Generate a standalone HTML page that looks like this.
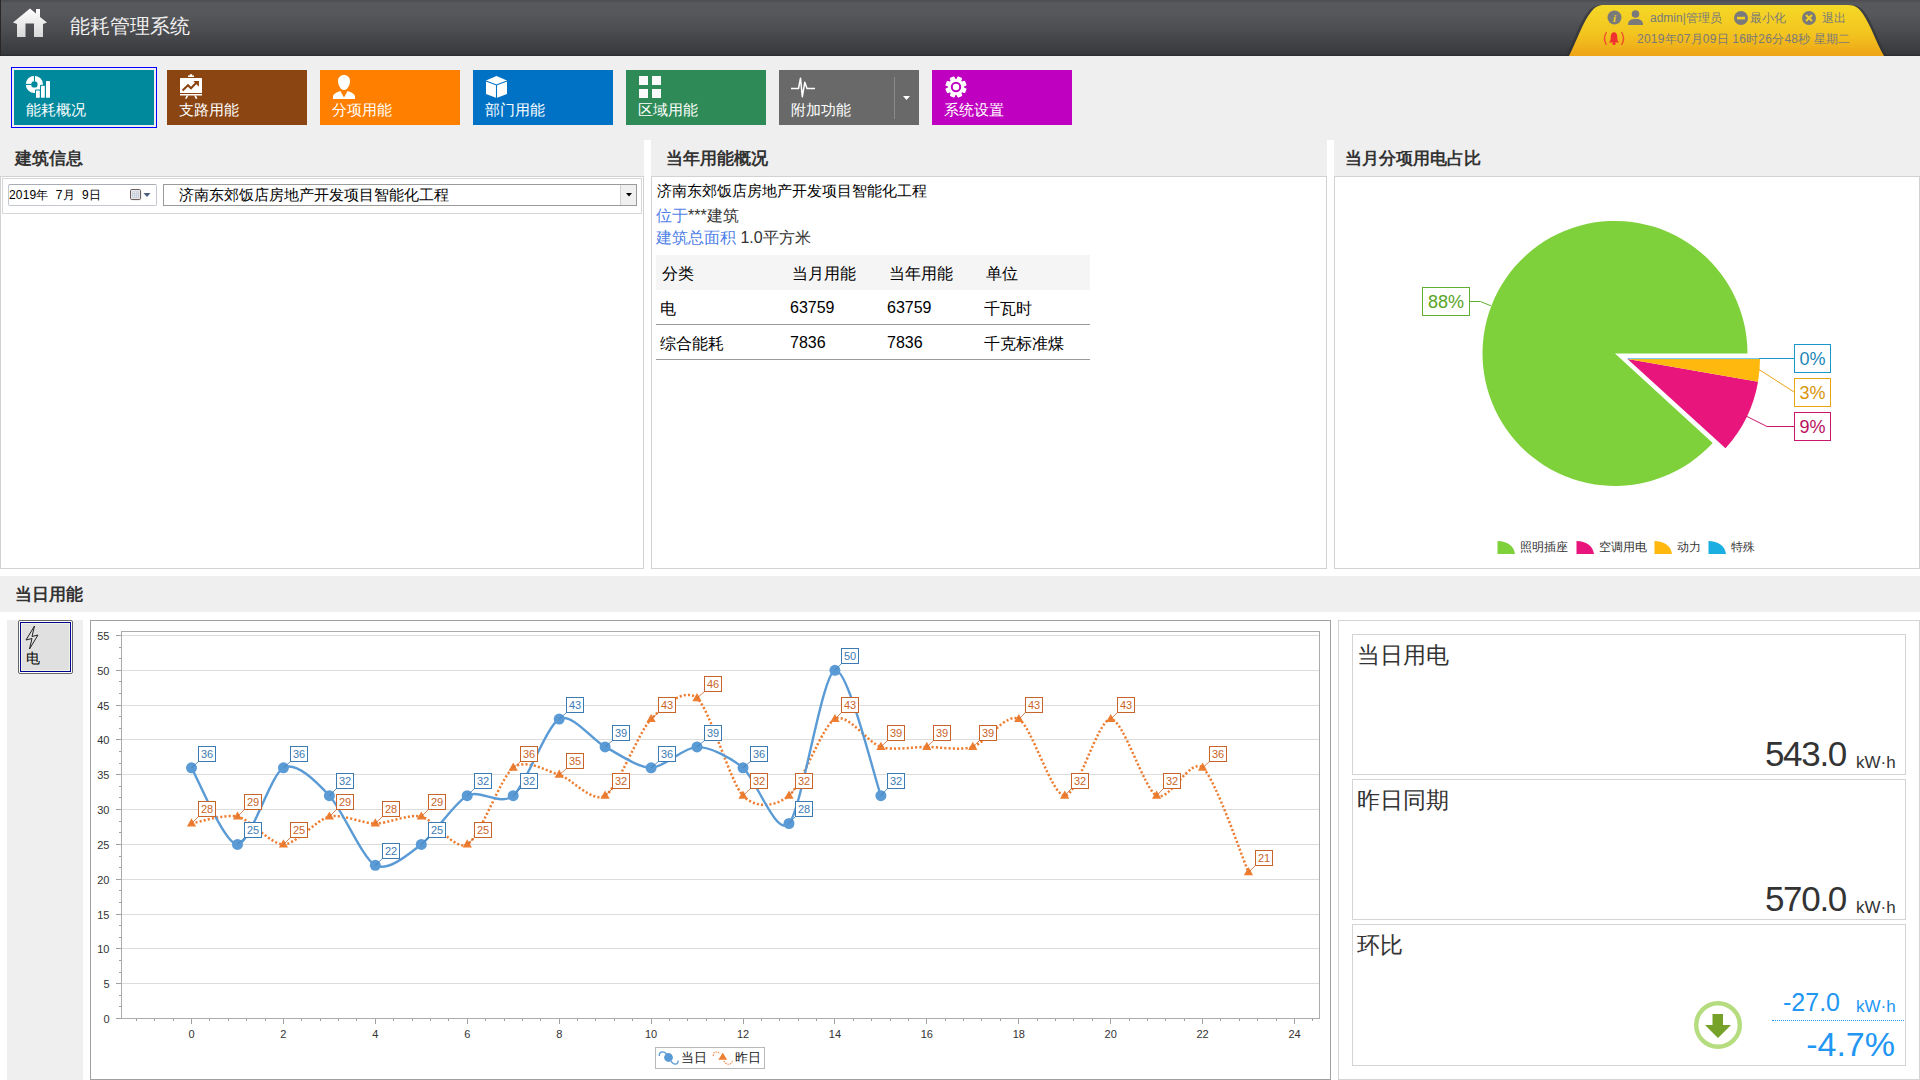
<!DOCTYPE html>
<html><head><meta charset="utf-8"><style>
*{margin:0;padding:0;box-sizing:border-box}
body{width:1920px;height:1080px;overflow:hidden;background:#efefef;font-family:"Liberation Sans", sans-serif;position:relative}
.a{position:absolute}
.hdr{left:0;top:0;width:1920px;height:56px;background:linear-gradient(#4c4c50 0px,#58595d 3px,#56575b 14px,#4c4d51 30px,#3e4043 46px,#36383b 54px,#28292c 56px);border-left:1px solid #2a2626}
.title{left:70px;top:13px;font-size:20px;color:#f0f0f0;letter-spacing:0px}
.btn{top:70px;width:140px;height:55px;color:#fff}
.btn .t{position:absolute;left:12px;top:31px;font-size:15px;line-height:18px}
.btn svg{position:absolute;left:8px;top:0px}
.ph{font-size:17px;font-weight:bold;color:#333}
.panel{background:#fff;border:1px solid #d2d2d2}
</style></head><body>

<div class="a hdr"></div>
<svg class="a" style="left:12px;top:8px" width="36" height="30" viewBox="0 0 36 30"><defs><linearGradient id="hg" x1="0" y1="0" x2="0" y2="1"><stop offset="0" stop-color="#fff"/><stop offset="1" stop-color="#d8d8d8"/></linearGradient></defs><path d="M18,0.5 L24,5.5 L24,1 L28,1 L28,9 L35,14.5 L31,16 L31,29 L22,29 L22,15.5 L13.5,15.5 L13.5,29 L5,29 L5,16 L1,14.5 Z" fill="url(#hg)"/></svg>
<div class="a title">能耗管理系统</div>
<svg class="a" style="left:1560px;top:0" width="340" height="56" viewBox="0 0 340 56"><defs><linearGradient id="yg" x1="0" y1="0" x2="0" y2="1"><stop offset="0" stop-color="#f5d827"/><stop offset="0.55" stop-color="#f3c51f"/><stop offset="1" stop-color="#eea417"/></linearGradient></defs><path d="M6,56 C14,40 20,22 28,12 C32,7 36,5 42,5 L290,5 C298,5 302,8 306,14 C314,26 318,42 327,56 Z" fill="#2e2f33" opacity="0.6"/><path d="M9,56 C17,40 23,22 31,12 C35,7 38,5 44,5 L288,5 C295,5 299,8 303,14 C311,26 316,42 324,56 Z" fill="url(#yg)"/></svg>
<div class="a" style="left:1650px;top:10px;font-size:12px;color:#7a7a7a">admin|管理员</div>
<div class="a" style="left:1750px;top:10px;font-size:12px;color:#7a7a7a">最小化</div>
<div class="a" style="left:1822px;top:10px;font-size:12px;color:#7a7a7a">退出</div>
<div class="a" style="left:1637px;top:31px;font-size:12px;letter-spacing:0.22px;color:#7a7a7a">2019年07月09日 16时26分48秒 星期二</div>
<svg class="a" style="left:1600px;top:8px" width="260" height="40"><circle cx="14.5" cy="9.5" r="7" fill="#7a7a7a"/><text x="14.5" y="14" text-anchor="middle" font-size="11" font-style="italic" font-weight="bold" fill="#f3d020" font-family='Liberation Serif'>i</text><circle cx="35.5" cy="6" r="3.8" fill="#7a7a7a"/><path d="M28,17 C28,12 31,11 35.5,11 C40,11 43,12 43,17 Z" fill="#7a7a7a"/><circle cx="141" cy="10" r="7" fill="#7a7a7a"/><rect x="137" y="8.8" width="8" height="2.6" fill="#f3d020"/><circle cx="209" cy="10" r="7" fill="#7a7a7a"/><path d="M206,7 L212,13 M212,7 L206,13" stroke="#f3d020" stroke-width="2"/><path d="M9,34.5 L19,34.5 C17.5,33 17.3,31.5 17.3,29 C17.3,26 16,24.3 14,24.3 C12,24.3 10.7,26 10.7,29 C10.7,31.5 10.5,33 9,34.5 Z" fill="#f03030"/><circle cx="14" cy="35.5" r="1.6" fill="#f03030"/><path d="M6.5,24 C4,28 4,33 6.5,37 M21.5,24 C24,28 24,33 21.5,37" stroke="#f04a30" stroke-width="1.3" fill="none"/></svg>
<div class="a btn" style="left:14px;background:#00889c"><svg width="40" height="30"><circle cx="12.4" cy="14.4" r="5.9" fill="none" stroke="#fff" stroke-width="5.4"/><rect x="11.9" y="5" width="1.1" height="6.5" fill="#00889c"/><rect x="3.5" y="13.9" width="6" height="1.1" fill="#00889c"/><rect x="13" y="19.5" width="5.8" height="9" rx="0.8" fill="#00889c"/><rect x="18" y="14.8" width="5.8" height="14" rx="0.8" fill="#00889c"/><rect x="14" y="20.5" width="3.8" height="7.3" rx="0.6" fill="#fff"/><rect x="19" y="15.8" width="3.8" height="12" rx="0.6" fill="#fff"/><rect x="24" y="11" width="4" height="16.8" rx="0.6" fill="#fff"/></svg><div class="t">能耗概况</div></div>
<div class="a btn" style="left:167px;background:#8b4513"><svg width="40" height="30"><rect x="5" y="8" width="22" height="15" rx="0.6" fill="#fff"/><path d="M13,7 L13,5.6 L14.8,5.6 L14.8,4.2 L17.2,4.2 L17.2,5.6 L19,5.6 L19,7 Z" fill="#fff"/><rect x="5" y="24" width="22" height="1.5" fill="#fff"/><path d="M11.6,25.5 L13.4,25.5 L11.6,28.8 L10,28.8 Z M19.2,25.5 L21,25.5 L22.4,28.8 L20.6,28.8 Z" fill="#fff"/><path d="M7.5,20.5 L13,15.3 L16,18.3 L21.5,12.6" stroke="#8b4513" stroke-width="2.1" fill="none"/><path d="M18.3,11 L24,11 L23.8,16.8 Z" fill="#8b4513"/></svg><div class="t">支路用能</div></div>
<div class="a btn" style="left:320px;background:#ff8000"><svg width="40" height="30"><path d="M16,5 C19.5,5 22,7.5 22,11 C22,12.5 21.8,14 21,15.5 C20,18 18.3,20 16,20 C13.7,20 12,18 11,15.5 C10.2,14 10,12.5 10,11 C10,7.5 12.5,5 16,5 Z" fill="#fff"/><path d="M12.3,21 L16,27.5 L19.6,21 C23,22 27,24 27,26.5 L27,29 L5,29 L5,26.5 C5,24 9,22 12.3,21 Z" fill="#fff"/></svg><div class="t">分项用能</div></div>
<div class="a btn" style="left:473px;background:#0072c6"><svg width="40" height="30"><path d="M15.5,6 L26,10.5 L26,24 L15.5,28 L5,24 L5,10.5 Z" fill="#fff"/><path d="M5,11 L15.5,15 L26,11 M15.5,15 L15.5,28.5" stroke="#0072c6" stroke-width="1.1" fill="none"/></svg><div class="t">部门用能</div></div>
<div class="a btn" style="left:626px;background:#2e8b57"><svg width="40" height="30"><rect x="5" y="6" width="9" height="9" fill="#fafafa"/><rect x="18" y="6" width="9" height="9" fill="#fafafa"/><rect x="5" y="19" width="9" height="9" fill="#fafafa"/><rect x="18" y="19" width="9" height="9" fill="#fafafa"/></svg><div class="t">区域用能</div></div>
<div class="a btn" style="left:779px;background:#696969"><svg width="40" height="30"><path d="M4,18.5 L11.5,18.5 L13.5,8.2 L15.3,26.8 L17.8,12.2 L20,18.5 L28,18.5" stroke="#fff" stroke-width="1.5" fill="none" stroke-linejoin="round"/></svg><div class="t">附加功能</div></div>
<div class="a btn" style="left:932px;background:#c000c0"><svg width="40" height="30"><g transform="translate(16,17)"><circle r="8" fill="#fff"/><g fill="#fff"><rect x="-2.6" y="-10.6" width="5.2" height="4" rx="1" transform="rotate(22)"/><rect x="-2.6" y="-10.6" width="5.2" height="4" rx="1" transform="rotate(67)"/><rect x="-2.6" y="-10.6" width="5.2" height="4" rx="1" transform="rotate(112)"/><rect x="-2.6" y="-10.6" width="5.2" height="4" rx="1" transform="rotate(157)"/><rect x="-2.6" y="-10.6" width="5.2" height="4" rx="1" transform="rotate(202)"/><rect x="-2.6" y="-10.6" width="5.2" height="4" rx="1" transform="rotate(247)"/><rect x="-2.6" y="-10.6" width="5.2" height="4" rx="1" transform="rotate(292)"/><rect x="-2.6" y="-10.6" width="5.2" height="4" rx="1" transform="rotate(337)"/></g><circle r="4.2" fill="none" stroke="#c000c0" stroke-width="2"/></g></svg><div class="t">系统设置</div></div>
<div class="a" style="left:11px;top:67px;width:146px;height:61px;border:1px solid #0000ff"></div>
<div class="a" style="left:894px;top:77px;width:1px;height:42px;background:#8a8a8a"></div>
<svg class="a" style="left:903px;top:96px" width="8" height="5"><path d="M0,0 L7,0 L3.5,4 Z" fill="#fff"/></svg>
<div class="a ph" style="left:15px;top:147px">建筑信息</div>
<div class="a ph" style="left:666px;top:147px">当年用能概况</div>
<div class="a ph" style="left:1345px;top:147px">当月分项用电占比</div>
<div class="a" style="left:644px;top:140px;width:7px;height:436px;background:#fff"></div>
<div class="a" style="left:1327px;top:140px;width:7px;height:436px;background:#fff"></div>
<div class="a" style="left:0;top:569px;width:1920px;height:7px;background:#fff"></div>
<div class="a panel" style="left:0;top:176px;width:644px;height:393px"></div>
<div class="a panel" style="left:651px;top:176px;width:676px;height:393px"></div>
<div class="a panel" style="left:1334px;top:176px;width:586px;height:393px"></div>
<div class="a" style="left:2px;top:178px;width:640px;height:36px;border:1px solid #d8d8d8;background:#fff"></div>
<div class="a" style="left:8px;top:184px;width:149px;height:22px;border:1px solid #c4c8d0;border-top-color:#a8acb4;border-radius:2px;background:#fff"></div>
<div class="a" style="left:9px;top:187px;font-size:12px;letter-spacing:0.2px;color:#000">2019年&nbsp;&nbsp;7月&nbsp;&nbsp;9日</div>
<svg class="a" style="left:129px;top:188px" width="24" height="14"><rect x="2" y="2" width="10.5" height="10.5" rx="1.5" fill="#c8c8c8" opacity="0.5"/><rect x="1.5" y="1.5" width="10" height="10" rx="1.2" fill="#e6eaf0" stroke="#6e5e5c"/><rect x="3" y="3.5" width="7" height="6.5" fill="#c4ccd8"/><rect x="3.8" y="4.2" width="1" height="1" fill="#fff"/><rect x="3.8" y="6.2" width="1" height="1" fill="#fff"/><rect x="3.8" y="8.2" width="1" height="1" fill="#fff"/><rect x="5.8" y="4.2" width="1" height="1" fill="#fff"/><rect x="5.8" y="6.2" width="1" height="1" fill="#fff"/><rect x="5.8" y="8.2" width="1" height="1" fill="#fff"/><rect x="7.8" y="4.2" width="1" height="1" fill="#fff"/><rect x="7.8" y="6.2" width="1" height="1" fill="#fff"/><rect x="7.8" y="8.2" width="1" height="1" fill="#fff"/><path d="M14.5,5 L21.5,5 L18,9 Z" fill="#4a5a80"/></svg>
<div class="a" style="left:163px;top:184px;width:474px;height:22px;border:1px solid #9a9a9a;background:#fff"></div>
<div class="a" style="left:620px;top:185px;width:16px;height:20px;background:#f0f0f0;border-left:1px solid #d0d0d0"></div>
<svg class="a" style="left:626px;top:193px" width="6" height="4"><path d="M0,0 L6,0 L3,3.5 Z" fill="#000"/></svg>
<div class="a" style="left:179px;top:186px;font-size:15px;color:#000">济南东郊饭店房地产开发项目智能化工程</div>
<div class="a" style="left:657px;top:182px;font-size:15px;color:#000">济南东郊饭店房地产开发项目智能化工程</div>
<div class="a" style="left:656px;top:206px;font-size:16px;color:#333"><span style="color:#4f7fe8">位于</span>***建筑</div>
<div class="a" style="left:656px;top:228px;font-size:16px;color:#333"><span style="color:#4f7fe8">建筑总面积</span> 1.0平方米</div>
<div class="a" style="left:656px;top:255px;width:434px;height:35px;background:#f5f5f5"></div>
<div class="a" style="left:656px;top:324px;width:434px;height:1px;background:#9a9a9a"></div>
<div class="a" style="left:656px;top:359px;width:434px;height:1px;background:#9a9a9a"></div>
<div class="a" style="left:662px;top:264px;font-size:16px;color:#000">分类</div>
<div class="a" style="left:792px;top:264px;font-size:16px;color:#000">当月用能</div>
<div class="a" style="left:889px;top:264px;font-size:16px;color:#000">当年用能</div>
<div class="a" style="left:986px;top:264px;font-size:16px;color:#000">单位</div>
<div class="a" style="left:660px;top:299px;font-size:16px;color:#000">电</div>
<div class="a" style="left:790px;top:299px;font-size:16px;color:#000">63759</div>
<div class="a" style="left:887px;top:299px;font-size:16px;color:#000">63759</div>
<div class="a" style="left:984px;top:299px;font-size:16px;color:#000">千瓦时</div>
<div class="a" style="left:660px;top:334px;font-size:16px;color:#000">综合能耗</div>
<div class="a" style="left:790px;top:334px;font-size:16px;color:#000">7836</div>
<div class="a" style="left:887px;top:334px;font-size:16px;color:#000">7836</div>
<div class="a" style="left:984px;top:334px;font-size:16px;color:#000">千克标准煤</div>
<svg class="a" style="left:1497px;top:540px" width="20" height="16"><path d="M0.5,14 L0.5,1 C10,1 17,6 18,14 Z" fill="#7fd13b"/></svg>
<div class="a" style="left:1520px;top:539px;font-size:12px;color:#333">照明插座</div>
<svg class="a" style="left:1576px;top:540px" width="20" height="16"><path d="M0.5,14 L0.5,1 C10,1 17,6 18,14 Z" fill="#e8157c"/></svg>
<div class="a" style="left:1599px;top:539px;font-size:12px;color:#333">空调用电</div>
<svg class="a" style="left:1654px;top:540px" width="20" height="16"><path d="M0.5,14 L0.5,1 C10,1 17,6 18,14 Z" fill="#ffb80d"/></svg>
<div class="a" style="left:1677px;top:539px;font-size:12px;color:#333">动力</div>
<svg class="a" style="left:1708px;top:540px" width="20" height="16"><path d="M0.5,14 L0.5,1 C10,1 17,6 18,14 Z" fill="#1aafe0"/></svg>
<div class="a" style="left:1731px;top:539px;font-size:12px;color:#333">特殊</div>
<div class="a ph" style="left:15px;top:583px">当日用能</div>
<div class="a" style="left:0;top:612px;width:1920px;height:468px;background:#fff"></div>
<div class="a" style="left:7px;top:620px;width:76px;height:460px;background:#efefef"></div>
<div class="a" style="left:18px;top:620px;width:55px;height:54px;border:1px solid #666;background:#fff;border-radius:2px"></div>
<div class="a" style="left:20px;top:622px;width:51px;height:50px;border:1px solid #000090;background:#e0e0e0;box-shadow:inset 1px 1px 0 #f2f2e4, inset -1px -1px 0 #f2f2e4"></div>
<svg class="a" style="left:25px;top:625px" width="16" height="26"><path d="M9.5,1 L1,15 L7,13.5 L4.5,24 L13,10 L7,11.5 Z" fill="none" stroke="#222" stroke-width="1"/></svg>
<div class="a" style="left:26px;top:650px;font-size:14px;color:#000">电</div>
<div class="a" style="left:90px;top:620px;width:241px;height:460px"></div>
<div class="a" style="left:90px;top:620px;width:1241px;height:460px;border:1px solid #a0a0a0;background:#fff"></div>
<div class="a" style="left:1338px;top:620px;width:582px;height:460px;border:1px solid #d4d4d4;background:#fff"></div>
<div class="a" style="left:1352px;top:634px;width:554px;height:141px;border:1px solid #d4d4d4"></div>
<div class="a" style="left:1357px;top:644px;font-size:23px;line-height:23px;color:#333">当日用电</div>
<div class="a" style="left:1600px;top:736px;width:246px;text-align:right;font-size:35px;line-height:35px;letter-spacing:-1.3px;color:#333">543.0</div>
<div class="a" style="left:1856px;top:754px;font-size:17px;line-height:17px;color:#333">kW·h</div>
<div class="a" style="left:1352px;top:779px;width:554px;height:141px;border:1px solid #d4d4d4"></div>
<div class="a" style="left:1357px;top:789px;font-size:23px;line-height:23px;color:#333">昨日同期</div>
<div class="a" style="left:1600px;top:881px;width:246px;text-align:right;font-size:35px;line-height:35px;letter-spacing:-1.3px;color:#333">570.0</div>
<div class="a" style="left:1856px;top:899px;font-size:17px;line-height:17px;color:#333">kW·h</div>
<div class="a" style="left:1352px;top:924px;width:554px;height:142px;border:1px solid #d4d4d4"></div>
<div class="a" style="left:1357px;top:934px;font-size:23px;line-height:23px;color:#333">环比</div>
<div class="a" style="left:1600px;top:990px;width:240px;text-align:right;font-size:25px;line-height:25px;color:#2196f3">-27.0</div>
<div class="a" style="left:1856px;top:998px;font-size:17px;line-height:17px;color:#2196f3">kW·h</div>
<div class="a" style="left:1772px;top:1020px;width:132px;border-top:1px dotted #2196f3"></div>
<div class="a" style="left:1600px;top:1027px;width:295px;text-align:right;font-size:34px;line-height:34px;color:#2196f3">-4.7%</div>
<svg class="a" style="left:1692px;top:1000px" width="52" height="52"><circle cx="26" cy="25" r="21.8" fill="#fff" stroke="#b5dc7e" stroke-width="4.4"/><path d="M20.5,14 L31,14 L31,25 L39,25 L26,38 L13,25 L20.5,25 Z" fill="#76a22a"/></svg>
<div class="a" style="left:655px;top:1047px;width:110px;height:22px;border:1px solid #b8b8b8;background:#fff"></div>
<svg class="a" style="left:657px;top:1049px" width="106" height="18"><path d="M2.3,7 C2,2 7,2 9.5,5" stroke="#5b9bd5" stroke-width="1.3" fill="none"/><path d="M14,12 C16,16 21,16.5 21.3,11.5" stroke="#5b9bd5" stroke-width="1.3" fill="none"/><circle cx="11.5" cy="8.5" r="4.4" fill="#5b9bd5"/><path d="M56.3,7 C56,2 61,2 63,5 M67,12 C69,16.5 75,16.5 75.6,11" stroke="#ed7d31" stroke-width="1.1" stroke-dasharray="1.3 1.1" fill="none"/><path d="M65.75,3.8 L70.2,10.8 L61.3,10.8 Z" fill="#ed7d31"/></svg>
<div class="a" style="left:681px;top:1049px;font-size:13px;color:#222">当日</div>
<div class="a" style="left:735px;top:1049px;font-size:13px;color:#222">昨日</div>
<svg width="1920" height="1080" style="position:absolute;left:0;top:0">
<line x1="116" y1="1018.5" x2="122" y2="1018.5" stroke="#a0a0a0" stroke-width="1"/>
<text x="109.5" y="1022.5" text-anchor="end" font-size="11" fill="#333" font-family='"Liberation Sans", sans-serif'>0</text>
<line x1="122" y1="983.5" x2="1319" y2="983.5" stroke="#dcdcdc" stroke-width="1"/>
<line x1="116" y1="983.5" x2="122" y2="983.5" stroke="#a0a0a0" stroke-width="1"/>
<text x="109.5" y="987.5" text-anchor="end" font-size="11" fill="#333" font-family='"Liberation Sans", sans-serif'>5</text>
<line x1="122" y1="948.5" x2="1319" y2="948.5" stroke="#dcdcdc" stroke-width="1"/>
<line x1="116" y1="948.5" x2="122" y2="948.5" stroke="#a0a0a0" stroke-width="1"/>
<text x="109.5" y="952.5" text-anchor="end" font-size="11" fill="#333" font-family='"Liberation Sans", sans-serif'>10</text>
<line x1="122" y1="914.5" x2="1319" y2="914.5" stroke="#dcdcdc" stroke-width="1"/>
<line x1="116" y1="914.5" x2="122" y2="914.5" stroke="#a0a0a0" stroke-width="1"/>
<text x="109.5" y="918.5" text-anchor="end" font-size="11" fill="#333" font-family='"Liberation Sans", sans-serif'>15</text>
<line x1="122" y1="879.5" x2="1319" y2="879.5" stroke="#dcdcdc" stroke-width="1"/>
<line x1="116" y1="879.5" x2="122" y2="879.5" stroke="#a0a0a0" stroke-width="1"/>
<text x="109.5" y="883.5" text-anchor="end" font-size="11" fill="#333" font-family='"Liberation Sans", sans-serif'>20</text>
<line x1="122" y1="844.5" x2="1319" y2="844.5" stroke="#dcdcdc" stroke-width="1"/>
<line x1="116" y1="844.5" x2="122" y2="844.5" stroke="#a0a0a0" stroke-width="1"/>
<text x="109.5" y="848.5" text-anchor="end" font-size="11" fill="#333" font-family='"Liberation Sans", sans-serif'>25</text>
<line x1="122" y1="809.5" x2="1319" y2="809.5" stroke="#dcdcdc" stroke-width="1"/>
<line x1="116" y1="809.5" x2="122" y2="809.5" stroke="#a0a0a0" stroke-width="1"/>
<text x="109.5" y="813.5" text-anchor="end" font-size="11" fill="#333" font-family='"Liberation Sans", sans-serif'>30</text>
<line x1="122" y1="774.5" x2="1319" y2="774.5" stroke="#dcdcdc" stroke-width="1"/>
<line x1="116" y1="774.5" x2="122" y2="774.5" stroke="#a0a0a0" stroke-width="1"/>
<text x="109.5" y="778.5" text-anchor="end" font-size="11" fill="#333" font-family='"Liberation Sans", sans-serif'>35</text>
<line x1="122" y1="739.5" x2="1319" y2="739.5" stroke="#dcdcdc" stroke-width="1"/>
<line x1="116" y1="739.5" x2="122" y2="739.5" stroke="#a0a0a0" stroke-width="1"/>
<text x="109.5" y="743.5" text-anchor="end" font-size="11" fill="#333" font-family='"Liberation Sans", sans-serif'>40</text>
<line x1="122" y1="705.5" x2="1319" y2="705.5" stroke="#dcdcdc" stroke-width="1"/>
<line x1="116" y1="705.5" x2="122" y2="705.5" stroke="#a0a0a0" stroke-width="1"/>
<text x="109.5" y="709.5" text-anchor="end" font-size="11" fill="#333" font-family='"Liberation Sans", sans-serif'>45</text>
<line x1="122" y1="670.5" x2="1319" y2="670.5" stroke="#dcdcdc" stroke-width="1"/>
<line x1="116" y1="670.5" x2="122" y2="670.5" stroke="#a0a0a0" stroke-width="1"/>
<text x="109.5" y="674.5" text-anchor="end" font-size="11" fill="#333" font-family='"Liberation Sans", sans-serif'>50</text>
<line x1="122" y1="635.5" x2="1319" y2="635.5" stroke="#dcdcdc" stroke-width="1"/>
<line x1="116" y1="635.5" x2="122" y2="635.5" stroke="#a0a0a0" stroke-width="1"/>
<text x="109.5" y="639.5" text-anchor="end" font-size="11" fill="#333" font-family='"Liberation Sans", sans-serif'>55</text>
<line x1="119" y1="1006.5" x2="122" y2="1006.5" stroke="#a0a0a0"/>
<line x1="119" y1="995.5" x2="122" y2="995.5" stroke="#a0a0a0"/>
<line x1="119" y1="972.5" x2="122" y2="972.5" stroke="#a0a0a0"/>
<line x1="119" y1="960.5" x2="122" y2="960.5" stroke="#a0a0a0"/>
<line x1="119" y1="937.5" x2="122" y2="937.5" stroke="#a0a0a0"/>
<line x1="119" y1="925.5" x2="122" y2="925.5" stroke="#a0a0a0"/>
<line x1="119" y1="902.5" x2="122" y2="902.5" stroke="#a0a0a0"/>
<line x1="119" y1="890.5" x2="122" y2="890.5" stroke="#a0a0a0"/>
<line x1="119" y1="867.5" x2="122" y2="867.5" stroke="#a0a0a0"/>
<line x1="119" y1="856.5" x2="122" y2="856.5" stroke="#a0a0a0"/>
<line x1="119" y1="832.5" x2="122" y2="832.5" stroke="#a0a0a0"/>
<line x1="119" y1="821.5" x2="122" y2="821.5" stroke="#a0a0a0"/>
<line x1="119" y1="797.5" x2="122" y2="797.5" stroke="#a0a0a0"/>
<line x1="119" y1="786.5" x2="122" y2="786.5" stroke="#a0a0a0"/>
<line x1="119" y1="763.5" x2="122" y2="763.5" stroke="#a0a0a0"/>
<line x1="119" y1="751.5" x2="122" y2="751.5" stroke="#a0a0a0"/>
<line x1="119" y1="728.5" x2="122" y2="728.5" stroke="#a0a0a0"/>
<line x1="119" y1="716.5" x2="122" y2="716.5" stroke="#a0a0a0"/>
<line x1="119" y1="693.5" x2="122" y2="693.5" stroke="#a0a0a0"/>
<line x1="119" y1="681.5" x2="122" y2="681.5" stroke="#a0a0a0"/>
<line x1="119" y1="658.5" x2="122" y2="658.5" stroke="#a0a0a0"/>
<line x1="119" y1="647.5" x2="122" y2="647.5" stroke="#a0a0a0"/>
<rect x="121.5" y="631.5" width="1198" height="387" fill="none" stroke="#ababab"/>
<line x1="136.5" y1="1019" x2="136.5" y2="1021" stroke="#a0a0a0"/>
<line x1="154.5" y1="1019" x2="154.5" y2="1021" stroke="#a0a0a0"/>
<line x1="173.5" y1="1019" x2="173.5" y2="1021" stroke="#a0a0a0"/>
<line x1="191.5" y1="1019" x2="191.5" y2="1024" stroke="#a0a0a0"/>
<text x="191.5" y="1038" text-anchor="middle" font-size="11" fill="#333" font-family='"Liberation Sans", sans-serif'>0</text>
<line x1="209.5" y1="1019" x2="209.5" y2="1021" stroke="#a0a0a0"/>
<line x1="228.5" y1="1019" x2="228.5" y2="1021" stroke="#a0a0a0"/>
<line x1="246.5" y1="1019" x2="246.5" y2="1021" stroke="#a0a0a0"/>
<line x1="265.5" y1="1019" x2="265.5" y2="1021" stroke="#a0a0a0"/>
<line x1="283.5" y1="1019" x2="283.5" y2="1024" stroke="#a0a0a0"/>
<text x="283.4" y="1038" text-anchor="middle" font-size="11" fill="#333" font-family='"Liberation Sans", sans-serif'>2</text>
<line x1="301.5" y1="1019" x2="301.5" y2="1021" stroke="#a0a0a0"/>
<line x1="320.5" y1="1019" x2="320.5" y2="1021" stroke="#a0a0a0"/>
<line x1="338.5" y1="1019" x2="338.5" y2="1021" stroke="#a0a0a0"/>
<line x1="356.5" y1="1019" x2="356.5" y2="1021" stroke="#a0a0a0"/>
<line x1="375.5" y1="1019" x2="375.5" y2="1024" stroke="#a0a0a0"/>
<text x="375.3" y="1038" text-anchor="middle" font-size="11" fill="#333" font-family='"Liberation Sans", sans-serif'>4</text>
<line x1="393.5" y1="1019" x2="393.5" y2="1021" stroke="#a0a0a0"/>
<line x1="412.5" y1="1019" x2="412.5" y2="1021" stroke="#a0a0a0"/>
<line x1="430.5" y1="1019" x2="430.5" y2="1021" stroke="#a0a0a0"/>
<line x1="448.5" y1="1019" x2="448.5" y2="1021" stroke="#a0a0a0"/>
<line x1="467.5" y1="1019" x2="467.5" y2="1024" stroke="#a0a0a0"/>
<text x="467.2" y="1038" text-anchor="middle" font-size="11" fill="#333" font-family='"Liberation Sans", sans-serif'>6</text>
<line x1="485.5" y1="1019" x2="485.5" y2="1021" stroke="#a0a0a0"/>
<line x1="504.5" y1="1019" x2="504.5" y2="1021" stroke="#a0a0a0"/>
<line x1="522.5" y1="1019" x2="522.5" y2="1021" stroke="#a0a0a0"/>
<line x1="540.5" y1="1019" x2="540.5" y2="1021" stroke="#a0a0a0"/>
<line x1="559.5" y1="1019" x2="559.5" y2="1024" stroke="#a0a0a0"/>
<text x="559.2" y="1038" text-anchor="middle" font-size="11" fill="#333" font-family='"Liberation Sans", sans-serif'>8</text>
<line x1="577.5" y1="1019" x2="577.5" y2="1021" stroke="#a0a0a0"/>
<line x1="595.5" y1="1019" x2="595.5" y2="1021" stroke="#a0a0a0"/>
<line x1="614.5" y1="1019" x2="614.5" y2="1021" stroke="#a0a0a0"/>
<line x1="632.5" y1="1019" x2="632.5" y2="1021" stroke="#a0a0a0"/>
<line x1="651.5" y1="1019" x2="651.5" y2="1024" stroke="#a0a0a0"/>
<text x="651.1" y="1038" text-anchor="middle" font-size="11" fill="#333" font-family='"Liberation Sans", sans-serif'>10</text>
<line x1="669.5" y1="1019" x2="669.5" y2="1021" stroke="#a0a0a0"/>
<line x1="687.5" y1="1019" x2="687.5" y2="1021" stroke="#a0a0a0"/>
<line x1="706.5" y1="1019" x2="706.5" y2="1021" stroke="#a0a0a0"/>
<line x1="724.5" y1="1019" x2="724.5" y2="1021" stroke="#a0a0a0"/>
<line x1="743.5" y1="1019" x2="743.5" y2="1024" stroke="#a0a0a0"/>
<text x="743.0" y="1038" text-anchor="middle" font-size="11" fill="#333" font-family='"Liberation Sans", sans-serif'>12</text>
<line x1="761.5" y1="1019" x2="761.5" y2="1021" stroke="#a0a0a0"/>
<line x1="779.5" y1="1019" x2="779.5" y2="1021" stroke="#a0a0a0"/>
<line x1="798.5" y1="1019" x2="798.5" y2="1021" stroke="#a0a0a0"/>
<line x1="816.5" y1="1019" x2="816.5" y2="1021" stroke="#a0a0a0"/>
<line x1="834.5" y1="1019" x2="834.5" y2="1024" stroke="#a0a0a0"/>
<text x="834.9" y="1038" text-anchor="middle" font-size="11" fill="#333" font-family='"Liberation Sans", sans-serif'>14</text>
<line x1="853.5" y1="1019" x2="853.5" y2="1021" stroke="#a0a0a0"/>
<line x1="871.5" y1="1019" x2="871.5" y2="1021" stroke="#a0a0a0"/>
<line x1="890.5" y1="1019" x2="890.5" y2="1021" stroke="#a0a0a0"/>
<line x1="908.5" y1="1019" x2="908.5" y2="1021" stroke="#a0a0a0"/>
<line x1="926.5" y1="1019" x2="926.5" y2="1024" stroke="#a0a0a0"/>
<text x="926.8" y="1038" text-anchor="middle" font-size="11" fill="#333" font-family='"Liberation Sans", sans-serif'>16</text>
<line x1="945.5" y1="1019" x2="945.5" y2="1021" stroke="#a0a0a0"/>
<line x1="963.5" y1="1019" x2="963.5" y2="1021" stroke="#a0a0a0"/>
<line x1="981.5" y1="1019" x2="981.5" y2="1021" stroke="#a0a0a0"/>
<line x1="1000.5" y1="1019" x2="1000.5" y2="1021" stroke="#a0a0a0"/>
<line x1="1018.5" y1="1019" x2="1018.5" y2="1024" stroke="#a0a0a0"/>
<text x="1018.8" y="1038" text-anchor="middle" font-size="11" fill="#333" font-family='"Liberation Sans", sans-serif'>18</text>
<line x1="1037.5" y1="1019" x2="1037.5" y2="1021" stroke="#a0a0a0"/>
<line x1="1055.5" y1="1019" x2="1055.5" y2="1021" stroke="#a0a0a0"/>
<line x1="1073.5" y1="1019" x2="1073.5" y2="1021" stroke="#a0a0a0"/>
<line x1="1092.5" y1="1019" x2="1092.5" y2="1021" stroke="#a0a0a0"/>
<line x1="1110.5" y1="1019" x2="1110.5" y2="1024" stroke="#a0a0a0"/>
<text x="1110.7" y="1038" text-anchor="middle" font-size="11" fill="#333" font-family='"Liberation Sans", sans-serif'>20</text>
<line x1="1129.5" y1="1019" x2="1129.5" y2="1021" stroke="#a0a0a0"/>
<line x1="1147.5" y1="1019" x2="1147.5" y2="1021" stroke="#a0a0a0"/>
<line x1="1165.5" y1="1019" x2="1165.5" y2="1021" stroke="#a0a0a0"/>
<line x1="1184.5" y1="1019" x2="1184.5" y2="1021" stroke="#a0a0a0"/>
<line x1="1202.5" y1="1019" x2="1202.5" y2="1024" stroke="#a0a0a0"/>
<text x="1202.6" y="1038" text-anchor="middle" font-size="11" fill="#333" font-family='"Liberation Sans", sans-serif'>22</text>
<line x1="1220.5" y1="1019" x2="1220.5" y2="1021" stroke="#a0a0a0"/>
<line x1="1239.5" y1="1019" x2="1239.5" y2="1021" stroke="#a0a0a0"/>
<line x1="1257.5" y1="1019" x2="1257.5" y2="1021" stroke="#a0a0a0"/>
<line x1="1276.5" y1="1019" x2="1276.5" y2="1021" stroke="#a0a0a0"/>
<line x1="1294.5" y1="1019" x2="1294.5" y2="1024" stroke="#a0a0a0"/>
<text x="1294.5" y="1038" text-anchor="middle" font-size="11" fill="#333" font-family='"Liberation Sans", sans-serif'>24</text>
<line x1="1312.5" y1="1019" x2="1312.5" y2="1021" stroke="#a0a0a0"/>
<path d="M191.5,823.5 C197.9,822.5 224.6,813.6 237.5,816.6 C250.3,819.5 270.5,844.4 283.4,844.4 C296.3,844.4 316.5,819.5 329.4,816.6 C342.2,813.6 362.5,823.5 375.3,823.5 C388.2,823.5 408.4,813.6 421.3,816.6 C434.2,819.5 454.4,851.2 467.2,844.4 C480.1,837.6 500.3,777.6 513.2,767.8 C526.1,758.1 546.3,770.9 559.2,774.8 C572.0,778.7 592.3,803.5 605.1,795.7 C618.0,787.9 638.2,732.7 651.1,719.1 C664.0,705.4 684.2,687.4 697.0,698.2 C709.9,708.9 730.1,782.0 743.0,795.7 C755.9,809.3 776.1,806.4 789.0,795.7 C801.8,784.9 822.0,725.9 834.9,719.1 C847.8,712.2 868.0,743.0 880.9,746.9 C893.7,750.8 914.0,746.9 926.8,746.9 C939.7,746.9 959.9,750.8 972.8,746.9 C985.7,743.0 1005.9,712.2 1018.8,719.1 C1031.6,725.9 1051.8,795.7 1064.7,795.7 C1077.6,795.7 1097.8,719.1 1110.7,719.1 C1123.5,719.1 1143.8,788.8 1156.6,795.7 C1169.5,802.5 1189.7,757.1 1202.6,767.8 C1215.5,778.5 1242.1,857.6 1248.5,872.3" fill="none" stroke="#ed7d31" stroke-width="2.5" stroke-dasharray="2.1 2.1"/>
<path d="M191.5,767.8 C197.9,778.5 224.6,844.4 237.5,844.4 C250.3,844.4 270.5,774.6 283.4,767.8 C296.3,761.0 316.5,782.0 329.4,795.7 C342.2,809.3 362.5,858.5 375.3,865.3 C388.2,872.1 408.4,854.2 421.3,844.4 C434.2,834.7 454.4,802.5 467.2,795.7 C480.1,788.8 500.3,806.4 513.2,795.7 C526.1,784.9 546.3,725.9 559.2,719.1 C572.0,712.2 592.3,740.1 605.1,746.9 C618.0,753.7 638.2,767.8 651.1,767.8 C664.0,767.8 684.2,746.9 697.0,746.9 C709.9,746.9 730.1,757.1 743.0,767.8 C755.9,778.5 776.1,837.2 789.0,823.5 C801.8,809.9 822.0,674.2 834.9,670.3 C847.8,666.4 874.4,778.1 880.9,795.7" fill="none" stroke="#5b9bd5" stroke-width="2.4"/>
<path d="M191.5,818.3 L196.1,826.5 L186.9,826.5 Z" fill="#ed7d31"/>
<path d="M237.5,811.4 L242.1,819.6 L232.9,819.6 Z" fill="#ed7d31"/>
<path d="M283.4,839.2 L288.0,847.4 L278.8,847.4 Z" fill="#ed7d31"/>
<path d="M329.4,811.4 L334.0,819.6 L324.8,819.6 Z" fill="#ed7d31"/>
<path d="M375.3,818.3 L379.9,826.5 L370.7,826.5 Z" fill="#ed7d31"/>
<path d="M421.3,811.4 L425.9,819.6 L416.7,819.6 Z" fill="#ed7d31"/>
<path d="M467.2,839.2 L471.9,847.4 L462.6,847.4 Z" fill="#ed7d31"/>
<path d="M513.2,762.6 L517.8,770.8 L508.6,770.8 Z" fill="#ed7d31"/>
<path d="M559.2,769.6 L563.8,777.8 L554.6,777.8 Z" fill="#ed7d31"/>
<path d="M605.1,790.5 L609.7,798.7 L600.5,798.7 Z" fill="#ed7d31"/>
<path d="M651.1,713.9 L655.7,722.1 L646.5,722.1 Z" fill="#ed7d31"/>
<path d="M697.0,693.0 L701.6,701.2 L692.4,701.2 Z" fill="#ed7d31"/>
<path d="M743.0,790.5 L747.6,798.7 L738.4,798.7 Z" fill="#ed7d31"/>
<path d="M789.0,790.5 L793.6,798.7 L784.4,798.7 Z" fill="#ed7d31"/>
<path d="M834.9,713.9 L839.5,722.1 L830.3,722.1 Z" fill="#ed7d31"/>
<path d="M880.9,741.7 L885.5,749.9 L876.3,749.9 Z" fill="#ed7d31"/>
<path d="M926.8,741.7 L931.4,749.9 L922.2,749.9 Z" fill="#ed7d31"/>
<path d="M972.8,741.7 L977.4,749.9 L968.2,749.9 Z" fill="#ed7d31"/>
<path d="M1018.8,713.9 L1023.4,722.1 L1014.1,722.1 Z" fill="#ed7d31"/>
<path d="M1064.7,790.5 L1069.3,798.7 L1060.1,798.7 Z" fill="#ed7d31"/>
<path d="M1110.7,713.9 L1115.3,722.1 L1106.1,722.1 Z" fill="#ed7d31"/>
<path d="M1156.6,790.5 L1161.2,798.7 L1152.0,798.7 Z" fill="#ed7d31"/>
<path d="M1202.6,762.6 L1207.2,770.8 L1198.0,770.8 Z" fill="#ed7d31"/>
<path d="M1248.5,867.1 L1253.1,875.3 L1243.9,875.3 Z" fill="#ed7d31"/>
<circle cx="191.5" cy="767.8" r="5.5" fill="#5b9bd5"/>
<circle cx="237.5" cy="844.4" r="5.5" fill="#5b9bd5"/>
<circle cx="283.4" cy="767.8" r="5.5" fill="#5b9bd5"/>
<circle cx="329.4" cy="795.7" r="5.5" fill="#5b9bd5"/>
<circle cx="375.3" cy="865.3" r="5.5" fill="#5b9bd5"/>
<circle cx="421.3" cy="844.4" r="5.5" fill="#5b9bd5"/>
<circle cx="467.2" cy="795.7" r="5.5" fill="#5b9bd5"/>
<circle cx="513.2" cy="795.7" r="5.5" fill="#5b9bd5"/>
<circle cx="559.2" cy="719.1" r="5.5" fill="#5b9bd5"/>
<circle cx="605.1" cy="746.9" r="5.5" fill="#5b9bd5"/>
<circle cx="651.1" cy="767.8" r="5.5" fill="#5b9bd5"/>
<circle cx="697.0" cy="746.9" r="5.5" fill="#5b9bd5"/>
<circle cx="743.0" cy="767.8" r="5.5" fill="#5b9bd5"/>
<circle cx="789.0" cy="823.5" r="5.5" fill="#5b9bd5"/>
<circle cx="834.9" cy="670.3" r="5.5" fill="#5b9bd5"/>
<circle cx="880.9" cy="795.7" r="5.5" fill="#5b9bd5"/>
<line x1="191.5" y1="823.5" x2="198.5" y2="816.5" stroke="#c8642a" stroke-width="0.8"/>
<rect x="198.5" y="801.5" width="17" height="15" fill="#fff" stroke="#c8642a"/>
<text x="207.0" y="813.0" text-anchor="middle" font-size="11" fill="#c8642a" font-family='"Liberation Sans", sans-serif'>28</text>
<line x1="237.5" y1="816.6" x2="244.5" y2="809.5" stroke="#c8642a" stroke-width="0.8"/>
<rect x="244.5" y="794.5" width="17" height="15" fill="#fff" stroke="#c8642a"/>
<text x="253.0" y="806.0" text-anchor="middle" font-size="11" fill="#c8642a" font-family='"Liberation Sans", sans-serif'>29</text>
<line x1="283.4" y1="844.4" x2="290.5" y2="837.5" stroke="#c8642a" stroke-width="0.8"/>
<rect x="290.5" y="822.5" width="17" height="15" fill="#fff" stroke="#c8642a"/>
<text x="299.0" y="834.0" text-anchor="middle" font-size="11" fill="#c8642a" font-family='"Liberation Sans", sans-serif'>25</text>
<line x1="329.4" y1="816.6" x2="336.5" y2="809.5" stroke="#c8642a" stroke-width="0.8"/>
<rect x="336.5" y="794.5" width="17" height="15" fill="#fff" stroke="#c8642a"/>
<text x="345.0" y="806.0" text-anchor="middle" font-size="11" fill="#c8642a" font-family='"Liberation Sans", sans-serif'>29</text>
<line x1="375.3" y1="823.5" x2="382.5" y2="816.5" stroke="#c8642a" stroke-width="0.8"/>
<rect x="382.5" y="801.5" width="17" height="15" fill="#fff" stroke="#c8642a"/>
<text x="391.0" y="813.0" text-anchor="middle" font-size="11" fill="#c8642a" font-family='"Liberation Sans", sans-serif'>28</text>
<line x1="421.3" y1="816.6" x2="428.5" y2="809.5" stroke="#c8642a" stroke-width="0.8"/>
<rect x="428.5" y="794.5" width="17" height="15" fill="#fff" stroke="#c8642a"/>
<text x="437.0" y="806.0" text-anchor="middle" font-size="11" fill="#c8642a" font-family='"Liberation Sans", sans-serif'>29</text>
<line x1="467.2" y1="844.4" x2="474.5" y2="837.5" stroke="#c8642a" stroke-width="0.8"/>
<rect x="474.5" y="822.5" width="17" height="15" fill="#fff" stroke="#c8642a"/>
<text x="483.0" y="834.0" text-anchor="middle" font-size="11" fill="#c8642a" font-family='"Liberation Sans", sans-serif'>25</text>
<line x1="513.2" y1="767.8" x2="520.5" y2="761.5" stroke="#c8642a" stroke-width="0.8"/>
<rect x="520.5" y="746.5" width="17" height="15" fill="#fff" stroke="#c8642a"/>
<text x="529.0" y="758.0" text-anchor="middle" font-size="11" fill="#c8642a" font-family='"Liberation Sans", sans-serif'>36</text>
<line x1="559.2" y1="774.8" x2="566.5" y2="768.5" stroke="#c8642a" stroke-width="0.8"/>
<rect x="566.5" y="753.5" width="17" height="15" fill="#fff" stroke="#c8642a"/>
<text x="575.0" y="765.0" text-anchor="middle" font-size="11" fill="#c8642a" font-family='"Liberation Sans", sans-serif'>35</text>
<line x1="605.1" y1="795.7" x2="612.5" y2="788.5" stroke="#c8642a" stroke-width="0.8"/>
<rect x="612.5" y="773.5" width="17" height="15" fill="#fff" stroke="#c8642a"/>
<text x="621.0" y="785.0" text-anchor="middle" font-size="11" fill="#c8642a" font-family='"Liberation Sans", sans-serif'>32</text>
<line x1="651.1" y1="719.1" x2="658.5" y2="712.5" stroke="#c8642a" stroke-width="0.8"/>
<rect x="658.5" y="697.5" width="17" height="15" fill="#fff" stroke="#c8642a"/>
<text x="667.0" y="709.0" text-anchor="middle" font-size="11" fill="#c8642a" font-family='"Liberation Sans", sans-serif'>43</text>
<line x1="697.0" y1="698.2" x2="704.5" y2="691.5" stroke="#c8642a" stroke-width="0.8"/>
<rect x="704.5" y="676.5" width="17" height="15" fill="#fff" stroke="#c8642a"/>
<text x="713.0" y="688.0" text-anchor="middle" font-size="11" fill="#c8642a" font-family='"Liberation Sans", sans-serif'>46</text>
<line x1="743.0" y1="795.7" x2="750.5" y2="788.5" stroke="#c8642a" stroke-width="0.8"/>
<rect x="750.5" y="773.5" width="17" height="15" fill="#fff" stroke="#c8642a"/>
<text x="759.0" y="785.0" text-anchor="middle" font-size="11" fill="#c8642a" font-family='"Liberation Sans", sans-serif'>32</text>
<line x1="789.0" y1="795.7" x2="795.5" y2="788.5" stroke="#c8642a" stroke-width="0.8"/>
<rect x="795.5" y="773.5" width="17" height="15" fill="#fff" stroke="#c8642a"/>
<text x="804.0" y="785.0" text-anchor="middle" font-size="11" fill="#c8642a" font-family='"Liberation Sans", sans-serif'>32</text>
<line x1="834.9" y1="719.1" x2="841.5" y2="712.5" stroke="#c8642a" stroke-width="0.8"/>
<rect x="841.5" y="697.5" width="17" height="15" fill="#fff" stroke="#c8642a"/>
<text x="850.0" y="709.0" text-anchor="middle" font-size="11" fill="#c8642a" font-family='"Liberation Sans", sans-serif'>43</text>
<line x1="880.9" y1="746.9" x2="887.5" y2="740.5" stroke="#c8642a" stroke-width="0.8"/>
<rect x="887.5" y="725.5" width="17" height="15" fill="#fff" stroke="#c8642a"/>
<text x="896.0" y="737.0" text-anchor="middle" font-size="11" fill="#c8642a" font-family='"Liberation Sans", sans-serif'>39</text>
<line x1="926.8" y1="746.9" x2="933.5" y2="740.5" stroke="#c8642a" stroke-width="0.8"/>
<rect x="933.5" y="725.5" width="17" height="15" fill="#fff" stroke="#c8642a"/>
<text x="942.0" y="737.0" text-anchor="middle" font-size="11" fill="#c8642a" font-family='"Liberation Sans", sans-serif'>39</text>
<line x1="972.8" y1="746.9" x2="979.5" y2="740.5" stroke="#c8642a" stroke-width="0.8"/>
<rect x="979.5" y="725.5" width="17" height="15" fill="#fff" stroke="#c8642a"/>
<text x="988.0" y="737.0" text-anchor="middle" font-size="11" fill="#c8642a" font-family='"Liberation Sans", sans-serif'>39</text>
<line x1="1018.8" y1="719.1" x2="1025.5" y2="712.5" stroke="#c8642a" stroke-width="0.8"/>
<rect x="1025.5" y="697.5" width="17" height="15" fill="#fff" stroke="#c8642a"/>
<text x="1034.0" y="709.0" text-anchor="middle" font-size="11" fill="#c8642a" font-family='"Liberation Sans", sans-serif'>43</text>
<line x1="1064.7" y1="795.7" x2="1071.5" y2="788.5" stroke="#c8642a" stroke-width="0.8"/>
<rect x="1071.5" y="773.5" width="17" height="15" fill="#fff" stroke="#c8642a"/>
<text x="1080.0" y="785.0" text-anchor="middle" font-size="11" fill="#c8642a" font-family='"Liberation Sans", sans-serif'>32</text>
<line x1="1110.7" y1="719.1" x2="1117.5" y2="712.5" stroke="#c8642a" stroke-width="0.8"/>
<rect x="1117.5" y="697.5" width="17" height="15" fill="#fff" stroke="#c8642a"/>
<text x="1126.0" y="709.0" text-anchor="middle" font-size="11" fill="#c8642a" font-family='"Liberation Sans", sans-serif'>43</text>
<line x1="1156.6" y1="795.7" x2="1163.5" y2="788.5" stroke="#c8642a" stroke-width="0.8"/>
<rect x="1163.5" y="773.5" width="17" height="15" fill="#fff" stroke="#c8642a"/>
<text x="1172.0" y="785.0" text-anchor="middle" font-size="11" fill="#c8642a" font-family='"Liberation Sans", sans-serif'>32</text>
<line x1="1202.6" y1="767.8" x2="1209.5" y2="761.5" stroke="#c8642a" stroke-width="0.8"/>
<rect x="1209.5" y="746.5" width="17" height="15" fill="#fff" stroke="#c8642a"/>
<text x="1218.0" y="758.0" text-anchor="middle" font-size="11" fill="#c8642a" font-family='"Liberation Sans", sans-serif'>36</text>
<line x1="1248.5" y1="872.3" x2="1255.5" y2="865.5" stroke="#c8642a" stroke-width="0.8"/>
<rect x="1255.5" y="850.5" width="17" height="15" fill="#fff" stroke="#c8642a"/>
<text x="1264.0" y="862.0" text-anchor="middle" font-size="11" fill="#c8642a" font-family='"Liberation Sans", sans-serif'>21</text>
<line x1="191.5" y1="767.8" x2="198.5" y2="761.5" stroke="#3c7ab4" stroke-width="0.8"/>
<rect x="198.5" y="746.5" width="17" height="15" fill="#fff" stroke="#3c7ab4"/>
<text x="207.0" y="758.0" text-anchor="middle" font-size="11" fill="#3c7ab4" font-family='"Liberation Sans", sans-serif'>36</text>
<line x1="237.5" y1="844.4" x2="244.5" y2="837.5" stroke="#3c7ab4" stroke-width="0.8"/>
<rect x="244.5" y="822.5" width="17" height="15" fill="#fff" stroke="#3c7ab4"/>
<text x="253.0" y="834.0" text-anchor="middle" font-size="11" fill="#3c7ab4" font-family='"Liberation Sans", sans-serif'>25</text>
<line x1="283.4" y1="767.8" x2="290.5" y2="761.5" stroke="#3c7ab4" stroke-width="0.8"/>
<rect x="290.5" y="746.5" width="17" height="15" fill="#fff" stroke="#3c7ab4"/>
<text x="299.0" y="758.0" text-anchor="middle" font-size="11" fill="#3c7ab4" font-family='"Liberation Sans", sans-serif'>36</text>
<line x1="329.4" y1="795.7" x2="336.5" y2="788.5" stroke="#3c7ab4" stroke-width="0.8"/>
<rect x="336.5" y="773.5" width="17" height="15" fill="#fff" stroke="#3c7ab4"/>
<text x="345.0" y="785.0" text-anchor="middle" font-size="11" fill="#3c7ab4" font-family='"Liberation Sans", sans-serif'>32</text>
<line x1="375.3" y1="865.3" x2="382.5" y2="858.5" stroke="#3c7ab4" stroke-width="0.8"/>
<rect x="382.5" y="843.5" width="17" height="15" fill="#fff" stroke="#3c7ab4"/>
<text x="391.0" y="855.0" text-anchor="middle" font-size="11" fill="#3c7ab4" font-family='"Liberation Sans", sans-serif'>22</text>
<line x1="421.3" y1="844.4" x2="428.5" y2="837.5" stroke="#3c7ab4" stroke-width="0.8"/>
<rect x="428.5" y="822.5" width="17" height="15" fill="#fff" stroke="#3c7ab4"/>
<text x="437.0" y="834.0" text-anchor="middle" font-size="11" fill="#3c7ab4" font-family='"Liberation Sans", sans-serif'>25</text>
<line x1="467.2" y1="795.7" x2="474.5" y2="788.5" stroke="#3c7ab4" stroke-width="0.8"/>
<rect x="474.5" y="773.5" width="17" height="15" fill="#fff" stroke="#3c7ab4"/>
<text x="483.0" y="785.0" text-anchor="middle" font-size="11" fill="#3c7ab4" font-family='"Liberation Sans", sans-serif'>32</text>
<line x1="513.2" y1="795.7" x2="520.5" y2="788.5" stroke="#3c7ab4" stroke-width="0.8"/>
<rect x="520.5" y="773.5" width="17" height="15" fill="#fff" stroke="#3c7ab4"/>
<text x="529.0" y="785.0" text-anchor="middle" font-size="11" fill="#3c7ab4" font-family='"Liberation Sans", sans-serif'>32</text>
<line x1="559.2" y1="719.1" x2="566.5" y2="712.5" stroke="#3c7ab4" stroke-width="0.8"/>
<rect x="566.5" y="697.5" width="17" height="15" fill="#fff" stroke="#3c7ab4"/>
<text x="575.0" y="709.0" text-anchor="middle" font-size="11" fill="#3c7ab4" font-family='"Liberation Sans", sans-serif'>43</text>
<line x1="605.1" y1="746.9" x2="612.5" y2="740.5" stroke="#3c7ab4" stroke-width="0.8"/>
<rect x="612.5" y="725.5" width="17" height="15" fill="#fff" stroke="#3c7ab4"/>
<text x="621.0" y="737.0" text-anchor="middle" font-size="11" fill="#3c7ab4" font-family='"Liberation Sans", sans-serif'>39</text>
<line x1="651.1" y1="767.8" x2="658.5" y2="761.5" stroke="#3c7ab4" stroke-width="0.8"/>
<rect x="658.5" y="746.5" width="17" height="15" fill="#fff" stroke="#3c7ab4"/>
<text x="667.0" y="758.0" text-anchor="middle" font-size="11" fill="#3c7ab4" font-family='"Liberation Sans", sans-serif'>36</text>
<line x1="697.0" y1="746.9" x2="704.5" y2="740.5" stroke="#3c7ab4" stroke-width="0.8"/>
<rect x="704.5" y="725.5" width="17" height="15" fill="#fff" stroke="#3c7ab4"/>
<text x="713.0" y="737.0" text-anchor="middle" font-size="11" fill="#3c7ab4" font-family='"Liberation Sans", sans-serif'>39</text>
<line x1="743.0" y1="767.8" x2="750.5" y2="761.5" stroke="#3c7ab4" stroke-width="0.8"/>
<rect x="750.5" y="746.5" width="17" height="15" fill="#fff" stroke="#3c7ab4"/>
<text x="759.0" y="758.0" text-anchor="middle" font-size="11" fill="#3c7ab4" font-family='"Liberation Sans", sans-serif'>36</text>
<line x1="789.0" y1="823.5" x2="795.5" y2="816.5" stroke="#3c7ab4" stroke-width="0.8"/>
<rect x="795.5" y="801.5" width="17" height="15" fill="#fff" stroke="#3c7ab4"/>
<text x="804.0" y="813.0" text-anchor="middle" font-size="11" fill="#3c7ab4" font-family='"Liberation Sans", sans-serif'>28</text>
<line x1="834.9" y1="670.3" x2="841.5" y2="663.5" stroke="#3c7ab4" stroke-width="0.8"/>
<rect x="841.5" y="648.5" width="17" height="15" fill="#fff" stroke="#3c7ab4"/>
<text x="850.0" y="660.0" text-anchor="middle" font-size="11" fill="#3c7ab4" font-family='"Liberation Sans", sans-serif'>50</text>
<line x1="880.9" y1="795.7" x2="887.5" y2="788.5" stroke="#3c7ab4" stroke-width="0.8"/>
<rect x="887.5" y="773.5" width="17" height="15" fill="#fff" stroke="#3c7ab4"/>
<text x="896.0" y="785.0" text-anchor="middle" font-size="11" fill="#3c7ab4" font-family='"Liberation Sans", sans-serif'>32</text>
<path d="M1615.00,353.40 L1712.69,442.92 A132.5,132.5 0 1 1 1747.50,353.40 Z" fill="#7fd13b"/>
<path d="M1627.50,359.00 L1758.05,381.64 A132.5,132.5 0 0 1 1725.50,448.17 Z" fill="#e8157c"/>
<path d="M1627.50,359.00 L1760.00,359.00 A132.5,132.5 0 0 1 1758.05,381.64 Z" fill="#ffb80d"/>
<line x1="1627.5" y1="358.6" x2="1759.5" y2="358.6" stroke="#6cc6e6" stroke-width="1"/>
<polyline points="1469,301.5 1480.4,301.5 1491,305.8" fill="none" stroke="#62ae30"/>
<rect x="1422.5" y="287.5" width="47" height="28" fill="#fff" stroke="#62ae30"/>
<text x="1446.0" y="308.0" text-anchor="middle" font-size="18" fill="#58a428" font-family='"Liberation Sans", sans-serif'>88%</text>
<line x1="1759" y1="358.5" x2="1794" y2="358.5" stroke="#1a96c8"/>
<rect x="1794.5" y="344.5" width="36" height="28" fill="#fff" stroke="#1a96c8"/>
<text x="1812.5" y="365.0" text-anchor="middle" font-size="18" fill="#1a86b8" font-family='"Liberation Sans", sans-serif'>0%</text>
<polyline points="1759,369.5 1794,392" fill="none" stroke="#e8a317"/>
<rect x="1794.5" y="378.5" width="36" height="28" fill="#fff" stroke="#e8a317"/>
<text x="1812.5" y="399.0" text-anchor="middle" font-size="18" fill="#d8940a" font-family='"Liberation Sans", sans-serif'>3%</text>
<polyline points="1746,416 1767,426.5 1794,426.5" fill="none" stroke="#c8186e"/>
<rect x="1794.5" y="412.5" width="36" height="28" fill="#fff" stroke="#c8186e"/>
<text x="1812.5" y="433.0" text-anchor="middle" font-size="18" fill="#b8105e" font-family='"Liberation Sans", sans-serif'>9%</text>
</svg>
</body></html>
